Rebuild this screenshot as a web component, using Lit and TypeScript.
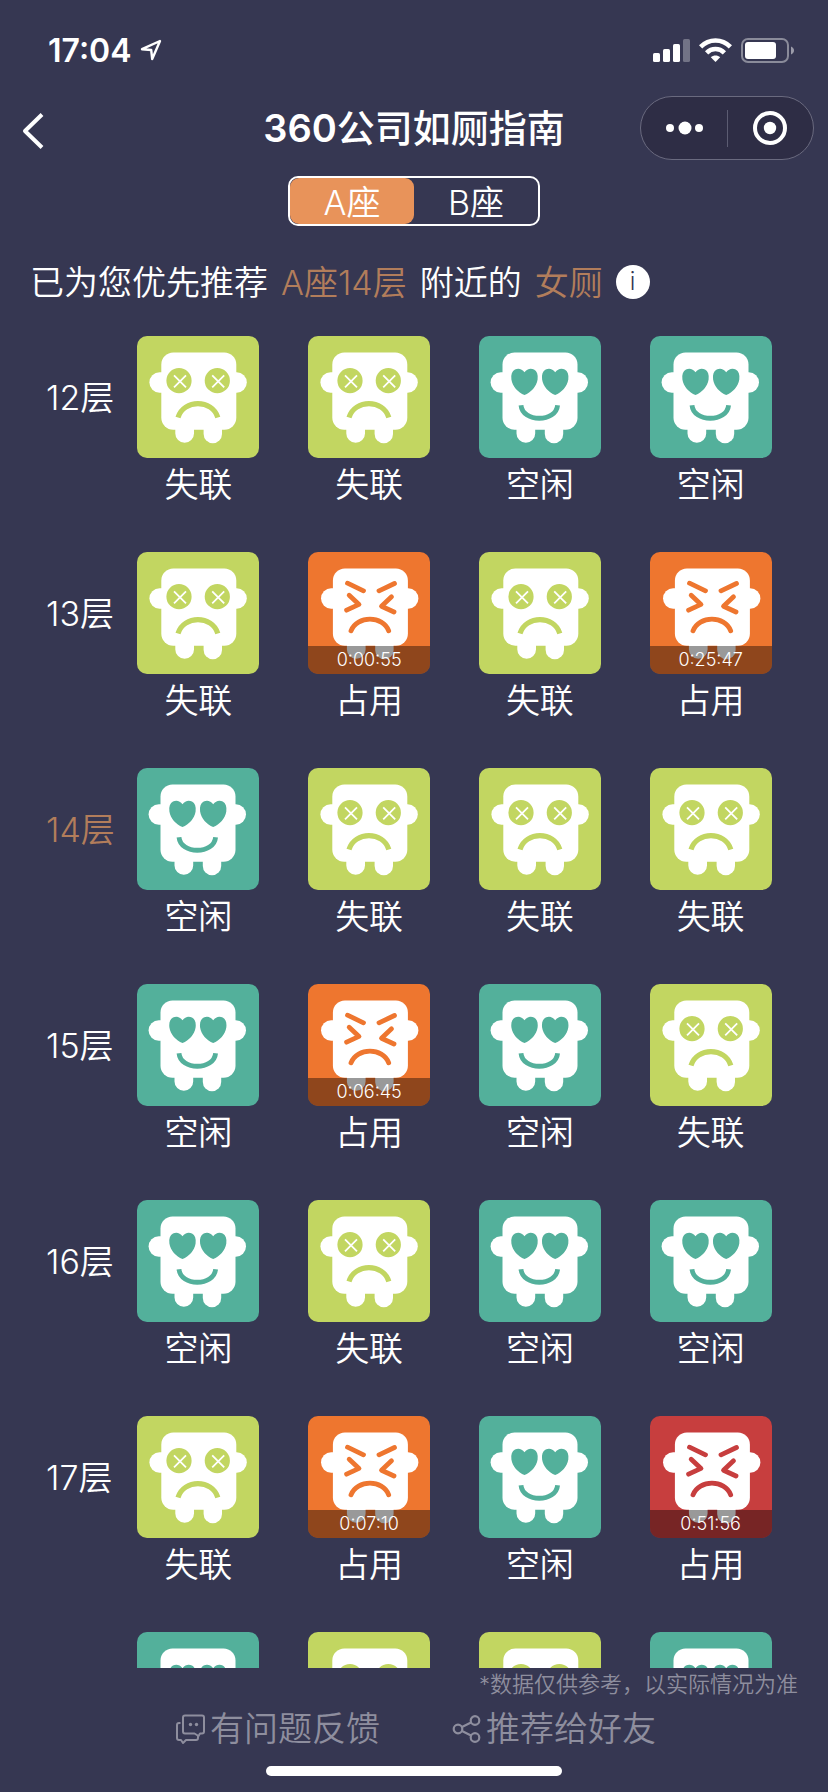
import { LitElement, html, svg, css } from "lit";
import { customElement, property, state } from "lit/decorators.js";
import { classMap } from "lit/directives/class-map.js";

type Mood = "lost" | "free" | "busy" | "late";

interface Stall {
  mood: Mood;
  time?: string;
}

interface Floor {
  name: string;
  stalls: Stall[];
}

const lost: Stall = { mood: "lost" };
const free: Stall = { mood: "free" };
const busy = (time: string): Stall => ({ mood: "busy", time });
const late = (time: string): Stall => ({ mood: "late", time });

const FLOORS: Floor[] = [
  { name: "12层", stalls: [lost, lost, free, free] },
  { name: "13层", stalls: [lost, busy("0:00:55"), lost, busy("0:25:47")] },
  { name: "14层", stalls: [free, lost, lost, lost] },
  { name: "15层", stalls: [free, busy("0:06:45"), free, lost] },
  { name: "16层", stalls: [free, lost, free, free] },
  { name: "17层", stalls: [lost, busy("0:07:10"), free, late("0:51:56")] },
  { name: "18层", stalls: [free, lost, lost, free] },
];

const STATUS: Record<Mood, string> = {
  lost: "失联",
  free: "空闲",
  busy: "占用",
  late: "占用",
};

// Head, ears and feet shared by every mood.
const body = svg`
  <g fill="#fff">
    <rect x="24.3" y="16.5" width="75" height="77.2" rx="12"></rect>
    <rect x="12.4" y="36.3" width="97.4" height="20.4" rx="10.2"></rect>
    <path d="M38.3 88H57V97.5a9.3 9.3 0 0 1-18.7 0Z"></path>
    <path d="M66.6 88H85V98a9.2 9.2 0 0 1-18.4 0Z"></path>
  </g>`;

const lostFace = svg`
  ${body}
  <circle class="ink" cx="42" cy="44.7" r="12.6"></circle>
  <circle class="ink" cx="80.3" cy="44.7" r="12.6"></circle>
  <path d="M37 39.3l12 12m0-12l-12 12M75.2 39.3l12 12m0-12l-12 12" stroke="#fff" stroke-width="1.8" fill="none"></path>
  <path class="line" d="M41 81.5C46.5 63.1 75.5 63.1 80.8 81.5" stroke-width="5.2"></path>`;

const freeFace = svg`
  <g transform="translate(-0.8 0)">${body}</g>
  <path class="ink" d="M45.500 36.3C48 32.6 52 31.8 55 33.6C58 35.4 59.2 38.6 58.6 43.500C57.6 50.500 52 56.500 45.500 59C39 56.500 33.4 50.500 32.4 43.500C31.8 38.6 33 35.4 36 33.6C39 31.8 43 32.6 45.500 36.3Z"></path>
  <path class="ink" d="M76.2 36.3C78.7 32.6 82.7 31.8 85.7 33.6C88.7 35.4 89.9 38.6 89.3 43.500C88.3 50.500 82.7 56.500 76.2 59C69.7 56.500 64.1 50.500 63.1 43.500C62.500 38.6 63.7 35.4 66.7 33.6C69.7 31.8 73.7 32.6 76.2 36.3Z"></path>
  <path class="line" d="M42 69.2C43.5 86.6 77 86.6 78.6 69.2" stroke-width="4.8"></path>`;

const angryFace = svg`
  <g transform="translate(0.6 0)">${body}</g>
  <g class="line" stroke-width="4.8" stroke-linecap="round" stroke-linejoin="round">
    <path d="M39.5 31.2L55.5 38.8M86.5 31.5L71 38.8"></path>
    <path d="M41.2 43.2L51 52.4L38.6 58.2M83.5 44.8L73.5 54.2L86 60"></path>
    <path d="M43 78.8C49 63.3 75 63.3 80.7 78.8"></path>
  </g>`;

@customElement("stall-tile")
export class StallTile extends LitElement {
  @property() mood: Mood = "free";
  @property() time = "";

  static styles = css`
    :host {
      display: block;
    }
    .stall {
      display: flex;
      flex-direction: column;
      align-items: center;
    }
    .tile {
      position: relative;
      width: 122px;
      height: 122px;
      border-radius: 10px;
      overflow: hidden;
      background: var(--tone);
    }
    .lost {
      --tone: #c2d661;
    }
    .free {
      --tone: #53b09b;
    }
    .busy {
      --tone: #ee762f;
    }
    .late {
      --tone: #c73e3e;
    }
    .face {
      display: block;
      width: 100%;
      height: 100%;
    }
    .ink {
      fill: var(--tone);
    }
    .line {
      fill: none;
      stroke: var(--tone);
    }
    .time {
      position: absolute;
      left: 0;
      right: 0;
      bottom: 0;
      background: rgba(0, 0, 0, 0.4);
      color: #fff;
      font-size: 18px;
      line-height: 28px;
      text-align: center;
    }
    .status {
      font-size: 34px;
      line-height: 54px;
      color: #fff;
    }
  `;

  render() {
    const face = this.mood === "lost" ? lostFace : this.mood === "free" ? freeFace : angryFace;
    return html`
      <div class="stall">
        <div class="tile ${this.mood}">
          <svg class="face" viewBox="0 0 122 122" aria-hidden="true">${face}</svg>
          ${this.time ? html`<span class="time">${this.time}</span>` : null}
        </div>
        <span class="status">${STATUS[this.mood]}</span>
      </div>
    `;
  }
}

@customElement("app-root")
export class AppRoot extends LitElement {
  @state() private building = "A座";

  static styles = css`
    :host {
      display: block;
      font-family: Inter, "Noto Sans CJK SC", sans-serif;
      font-weight: 350;
      color: #fff;
    }
    button {
      font: inherit;
      color: inherit;
      background: none;
      border: 0;
      padding: 0;
      cursor: pointer;
    }
    svg {
      display: block;
      flex: none;
    }
    .page {
      display: flex;
      flex-direction: column;
      height: 100vh;
      background: #363752;
    }
    .system {
      display: flex;
      align-items: center;
      justify-content: space-between;
      box-sizing: border-box;
      height: 96px;
      padding: 4px 34px 0 48px;
    }
    .clock {
      display: flex;
      align-items: center;
      gap: 8px;
      font-size: 32px;
      font-weight: 600;
    }
    .signals {
      display: flex;
      align-items: center;
      gap: 9px;
    }
    .nav {
      display: grid;
      grid-template-columns: 1fr auto 1fr;
      align-items: center;
      padding: 0 14px;
    }
    .back {
      justify-self: start;
      padding: 6px 8px 0;
    }
    .title {
      margin: 0;
      font-size: 38px;
      line-height: 64px;
      font-weight: 500;
    }
    .digits {
      font-weight: 600;
    }
    .capsule {
      justify-self: end;
      display: flex;
      align-items: center;
      box-sizing: border-box;
      width: 174px;
      height: 64px;
      border: 1px solid #6a6a7f;
      border-radius: 32px;
      background: #2e2d45;
    }
    .tool {
      flex: 1;
      display: flex;
      justify-content: center;
    }
    .rule {
      width: 1px;
      height: 37px;
      background: #5c5c72;
    }
    .tabs {
      align-self: center;
      display: flex;
      box-sizing: border-box;
      width: 252px;
      height: 50px;
      margin-top: 16px;
      border: 2px solid #fff;
      border-radius: 10px;
    }
    .tab {
      flex: 1;
      padding-top: 4px;
      border-radius: 9px;
      font-size: 34px;
      line-height: 42px;
    }
    .picked {
      background: #e8935a;
    }
    .advice {
      display: flex;
      align-items: center;
      gap: 13px;
      margin: 30px 30px 29px;
      font-size: 34px;
      line-height: 48px;
    }
    .words {
      padding-top: 3px;
    }
    .accent {
      color: #b27d5b;
    }
    .info {
      width: 34px;
      height: 34px;
      border-radius: 50%;
      background: #fff;
      color: #363752;
      font-size: 24px;
      line-height: 34px;
    }
    .list {
      flex: 1;
      min-height: 0;
      margin: 0;
      padding: 0 32px;
      list-style: none;
      overflow-y: auto;
      scrollbar-width: none;
    }
    .floor {
      display: grid;
      grid-template-columns: 81px repeat(4, 1fr);
      padding-bottom: 40px;
    }
    .name {
      padding-left: 14px;
      font-size: 34px;
      line-height: 124px;
      white-space: nowrap;
    }
    .footer {
      display: flex;
      flex-direction: column;
      color: #8e8e9e;
    }
    .note {
      margin: 0;
      padding: 0 30px;
      font-size: 22px;
      line-height: 32px;
      text-align: right;
    }
    .actions {
      display: flex;
      justify-content: center;
      gap: 72px;
      padding-left: 4px;
    }
    .action {
      display: flex;
      align-items: center;
      gap: 5px;
      font-size: 34px;
      line-height: 58px;
    }
    .home {
      align-self: center;
      width: 296px;
      height: 10px;
      margin: 8px 0 16px;
      border-radius: 5px;
      background: #fff;
    }
  `;

  private tab(name: string) {
    const on = this.building === name;
    return html`<button
      class=${classMap({ tab: true, picked: on })}
      role="tab"
      aria-selected=${on}
      @click=${() => (this.building = name)}
    >${name}</button>`;
  }

  render() {
    return html`
      <div class="page">
        <div class="system">
          <div class="clock">
            <span>17:04</span>
            <svg width="22" height="22" viewBox="0 0 22 22" fill="none" stroke="#fff" stroke-width="2.4" stroke-linejoin="round">
              <path d="M20 2L2 10.2L11.2 11L12.2 20Z"></path>
            </svg>
          </div>
          <div class="signals">
            <svg width="37" height="23" viewBox="0 0 37 23" fill="#fff">
              <rect x="0" y="14" width="7" height="9" rx="1.6"></rect>
              <rect x="10" y="10" width="7" height="13" rx="1.6"></rect>
              <rect x="20" y="5" width="7" height="18" rx="1.6"></rect>
              <rect x="30" y="0" width="7" height="23" rx="1.6" opacity=".3"></rect>
            </svg>
            <svg width="33" height="24" viewBox="0 0 33 24" fill="none" stroke="#fff" stroke-width="4.6">
              <path d="M1.6 8.8C10 .3 23 .3 31.4 8.8"></path>
              <path d="M7.6 14.8C12.6 9.8 20.4 9.8 25.4 14.8"></path>
              <path d="M16.5 24L11.8 19.2C14.4 16.8 18.6 16.8 21.2 19.2Z" fill="#fff" stroke="none"></path>
            </svg>
            <svg width="53" height="25" viewBox="0 0 53 25">
              <rect x="1" y="1" width="46" height="23" rx="6" fill="none" stroke="#fff" stroke-width="2" opacity=".42"></rect>
              <rect x="4" y="4" width="31" height="17" rx="3" fill="#fff"></rect>
              <path d="M50 8.5C54 10 54 15 50 16.5Z" fill="#fff" opacity=".5"></path>
            </svg>
          </div>
        </div>

        <header class="nav">
          <button class="back" aria-label="返回">
            <svg width="22" height="36" viewBox="0 0 22 36" fill="none" stroke="#fff" stroke-width="4" stroke-linejoin="round">
              <path d="M20 1.5L3 18L20 34.5"></path>
            </svg>
          </button>
          <h1 class="title"><span class="digits">360</span>公司如厕指南</h1>
          <div class="capsule">
            <button class="tool" aria-label="更多">
              <svg width="38" height="14" viewBox="0 0 38 14" fill="#fff">
                <circle cx="5" cy="7" r="4"></circle>
                <circle cx="20" cy="7" r="6.5"></circle>
                <circle cx="34" cy="7" r="4"></circle>
              </svg>
            </button>
            <span class="rule"></span>
            <button class="tool" aria-label="关闭">
              <svg width="34" height="34" viewBox="0 0 34 34">
                <circle cx="17" cy="17" r="15" fill="none" stroke="#fff" stroke-width="4"></circle>
                <circle cx="17" cy="17" r="6.2" fill="#fff"></circle>
              </svg>
            </button>
          </div>
        </header>

        <div class="tabs" role="tablist">${this.tab("A座")}${this.tab("B座")}</div>

        <div class="advice">
          <span class="words">已为您优先推荐</span>
          <span class="words accent">A座14层</span>
          <span class="words">附近的</span>
          <span class="words accent">女厕</span>
          <button class="info" aria-label="说明">i</button>
        </div>

        <ul class="list">
          ${FLOORS.map(
            (floor) => html`
              <li class="floor">
                <span class=${classMap({ name: true, accent: floor.name === "14层" })}>${floor.name}</span>
                ${floor.stalls.map(
                  (stall) => html`<stall-tile .mood=${stall.mood} .time=${stall.time ?? ""}></stall-tile>`
                )}
              </li>
            `
          )}
        </ul>

        <footer class="footer">
          <p class="note">*数据仅供参考，以实际情况为准</p>
          <div class="actions">
            <button class="action">
              <svg width="29" height="30" viewBox="0 0 29 30" fill="none" stroke="currentColor" stroke-width="2" stroke-linejoin="round">
                <path d="M9 1.5H26A2 2 0 0 1 28 3.5V17.5A2 2 0 0 1 26 19.5H24L22.5 22L18.5 19.5H9A2 2 0 0 1 7 17.5V3.5A2 2 0 0 1 9 1.5Z"></path>
                <path d="M4.5 9H3A2 2 0 0 0 1 11V24A2 2 0 0 0 3 26H5L7 29L10 26H20A2 2 0 0 0 22 24V22"></path>
                <circle cx="14.5" cy="10.5" r="1.7" fill="currentColor" stroke="none"></circle>
                <circle cx="20.5" cy="10.5" r="1.7" fill="currentColor" stroke="none"></circle>
              </svg>
              <span>有问题反馈</span>
            </button>
            <button class="action">
              <svg width="29" height="28" viewBox="0 0 29 28" fill="none" stroke="currentColor" stroke-width="2.2">
                <circle cx="6" cy="14" r="4.3"></circle>
                <circle cx="23" cy="5.5" r="4.3"></circle>
                <circle cx="23" cy="22.5" r="4.3"></circle>
                <path d="M10 12L19 7.5M10 16L19 20.5"></path>
              </svg>
              <span>推荐给好友</span>
            </button>
          </div>
          <div class="home"></div>
        </footer>
      </div>
    `;
  }
}
